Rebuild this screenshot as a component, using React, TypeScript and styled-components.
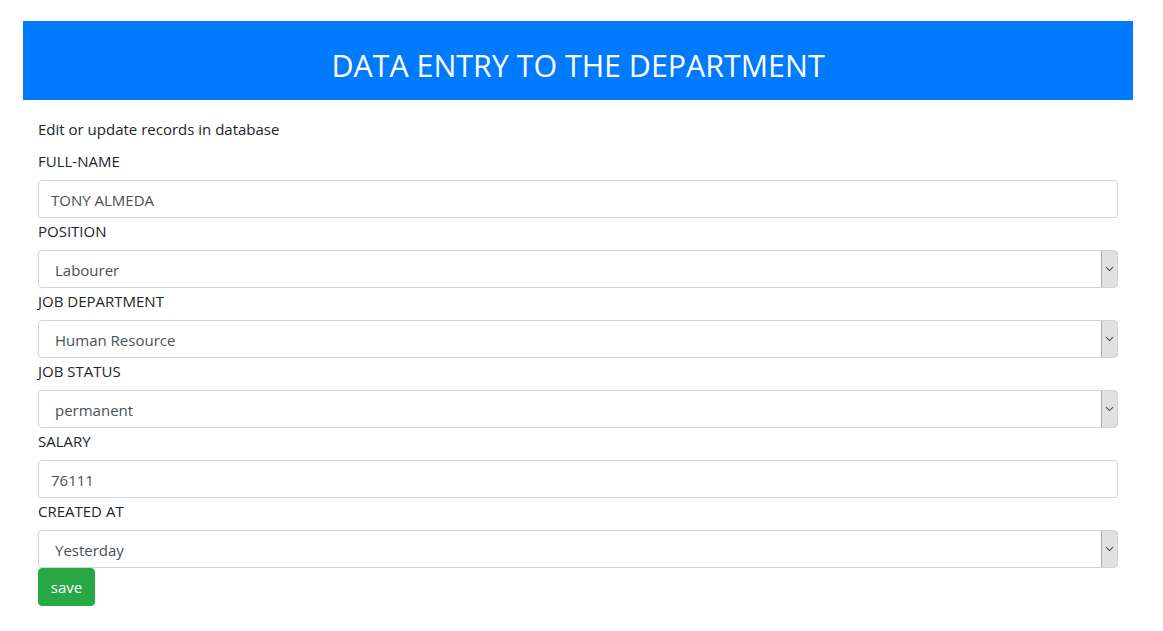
import React from 'react';
import styled, { createGlobalStyle } from 'styled-components';

const GlobalStyle = createGlobalStyle`
    * {
        box-sizing: border-box;
    }

    body {
        margin: 0;
        background: #ffffff;
        color: #212529;
        font-family: 'Open Sans', 'Noto Sans', sans-serif;
        font-size: 15px;
        line-height: 24px;
    }
`;

const fields = [
    { label: 'FULL-NAME', value: 'TONY ALMEDA', kind: 'input' },
    { label: 'POSITION', value: 'Labourer', kind: 'select' },
    { label: 'JOB DEPARTMENT', value: 'Human Resource', kind: 'select' },
    { label: 'JOB STATUS', value: 'permanent', kind: 'select' },
    { label: 'SALARY', value: '76111', kind: 'input' },
    { label: 'CREATED AT', value: 'Yesterday', kind: 'select' },
];

const App = () => {
    return (
        <>
            <GlobalStyle />
            <Page>
                <Header>
                    <Title>DATA ENTRY TO THE DEPARTMENT</Title>
                </Header>
                <Form>
                    <Intro>Edit or update records in database</Intro>
                    {fields.map((f) => (
                        <Group key={f.label}>
                            <Label>{f.label}</Label>
                            <Field>
                                <FieldText $select={f.kind === 'select'}>
                                    {f.value}
                                </FieldText>
                                {f.kind === 'select' && (
                                    <DropButton>
                                        <svg width="9" height="6" viewBox="0 0 9 6">
                                            <path
                                                d="M1 1.2 L4.5 4.6 L8 1.2"
                                                fill="none"
                                                stroke="#4a4a4a"
                                                strokeWidth="1.1"
                                            />
                                        </svg>
                                    </DropButton>
                                )}
                            </Field>
                        </Group>
                    ))}
                    <SaveButton>save</SaveButton>
                </Form>
            </Page>
        </>
    );
};

const Page = styled.div`
    padding: 21px 30px 0 23px;
    width: 1163px;
`;

const Header = styled.div`
    width: 1110px;
    height: 79px;
    background: #007bff;
    display: flex;
    align-items: center;
    justify-content: center;
`;

const Title = styled.h2`
    margin: 0;
    color: #ffffff;
    font-weight: 400;
    font-size: 30.4px;
    line-height: 38px;
    padding-top: 11px;
`;

const Form = styled.div`
    width: 1110px;
    padding: 17px 15px 0;
    display: flex;
    flex-direction: column;
`;

const Intro = styled.p`
    margin: 0 0 7px;
`;

const Group = styled.div`
    display: flex;
    flex-direction: column;
`;

const Label = styled.label`
    margin-bottom: 8px;
    padding-top: 1px;
    height: 24px;
    color: #212529;
`;

const Field = styled.div`
    height: 38px;
    display: flex;
    align-items: stretch;
    border: 1px solid #ced4da;
    border-radius: 4px;
    background: #ffffff;
    overflow: hidden;
`;

const FieldText = styled.div<{ $select: boolean }>`
    flex: 1;
    display: flex;
    align-items: center;
    padding: 1px ${(p) => (p.$select ? '16px' : '12px')} 0;
    color: #495057;
`;

const DropButton = styled.div`
    width: 17px;
    display: flex;
    align-items: center;
    justify-content: center;
    background: #e1e1e1;
    border: 1px solid #a6a6a6;
    border-radius: 0 4px 4px 0;
    margin: -1px -1px -1px 0;
`;

const SaveButton = styled.button`
    align-self: flex-start;
    height: 38px;
    width: 57px;
    padding: 0;
    border: 1px solid #28a745;
    border-radius: 4px;
    background: #28a745;
    color: #ffffff;
    font-family: 'Open Sans', 'Noto Sans', sans-serif;
    font-size: 15px;
    line-height: 24px;
`;

export default App;
